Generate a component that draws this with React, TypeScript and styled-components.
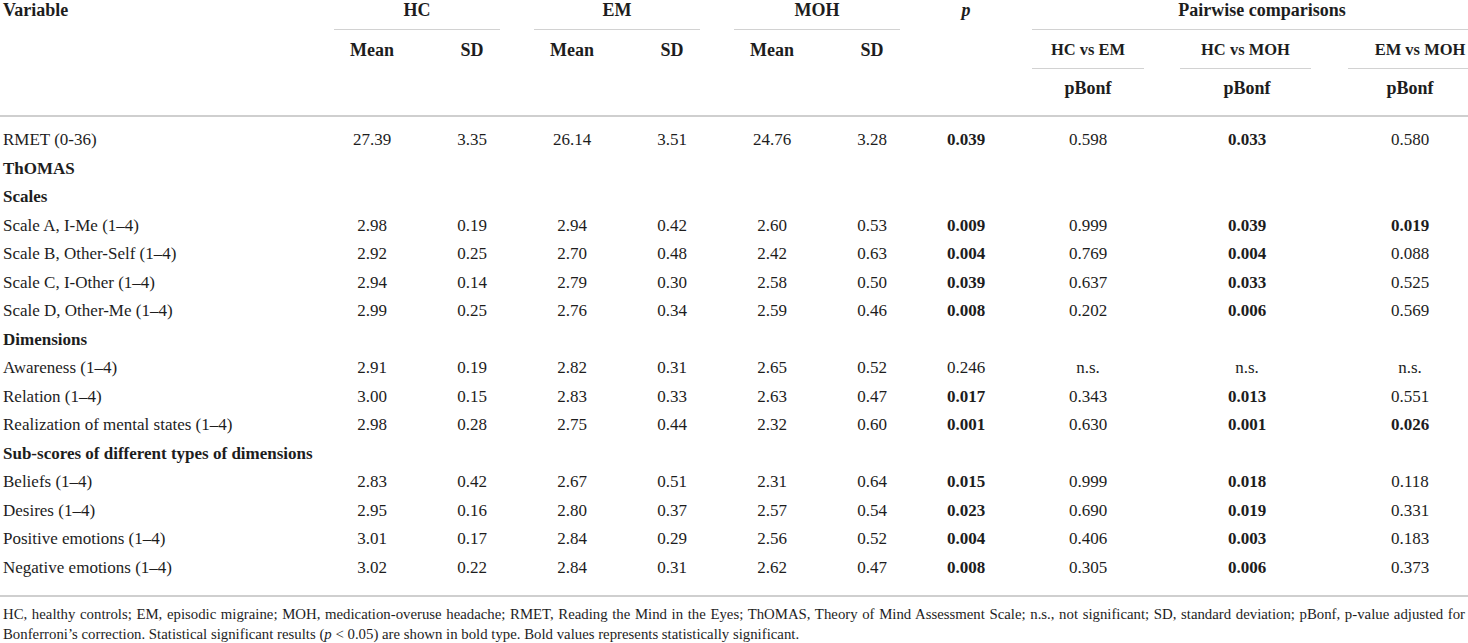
import React from "react";
import styled, { createGlobalStyle } from "styled-components";

const GlobalStyle = createGlobalStyle`
	html, body {
		margin: 0;
		padding: 0;
		background: #ffffff;
	}
	body {
		font-family: "Liberation Serif", "DejaVu Serif", serif;
		color: #1d1d1d;
		overflow: hidden;
	}
`;

const Page = styled.div`
	width: 1468px;
	height: 643px;
	overflow: hidden;
`;

const Table = styled.table`
	width: 1492px;
	table-layout: fixed;
	border-collapse: collapse;
	font-size: 17px;
`;

const HeadCell = styled.th<{ $align?: "left" | "center"; $pt?: number; $last?: boolean; $small?: boolean }>`
	padding: ${p => p.$pt ?? 0}px 0 ${p => (p.$last ? 17 : 0)}px ${p => (p.$align === "left" ? 3 : 0)}px;
	text-align: ${p => p.$align ?? "center"};
	vertical-align: top;
	font-size: ${p => (p.$small ? 16.5 : 18)}px;
	line-height: 20px;
	font-weight: 700;
	white-space: nowrap;
	border-bottom: ${p => (p.$last ? "2px solid #cfcfcf" : "none")};
`;

const Underlined = styled.div<{ $l: number; $r: number; $pb: number }>`
	margin: 0 ${p => p.$r}px 0 ${p => p.$l}px;
	padding-bottom: ${p => p.$pb}px;
	border-bottom: 1px solid #d2d2d2;
`;

const Italic = styled.span`
	font-style: italic;
`;

const Row = styled.tr`
	&:first-child td {
		padding-top: 9px;
	}
	&:last-child td {
		padding-bottom: 13px;
		border-bottom: 2px solid #cfcfcf;
	}
`;

const Cell = styled.td<{ $bold?: boolean; $label?: boolean }>`
	padding: 0 0 0 ${p => (p.$label ? 3 : 0)}px;
	height: 28.5px;
	line-height: 28.5px;
	text-align: ${p => (p.$label ? "left" : "center")};
	font-weight: ${p => (p.$bold ? 700 : 400)};
	white-space: nowrap;
	vertical-align: middle;
`;

const Footnote = styled.p`
	margin: 7px 3px 0 3px;
	font-size: 14.8px;
	line-height: 20px;
	text-align: justify;
`;

const colWidths = [322, 100, 100, 100, 100, 100, 100, 88, 156, 162, 164];

type DataRow = { label: string; values?: string[] };

// values starting with "*" are shown in bold
const rows: DataRow[] = [
	{ label: "RMET (0-36)", values: ["27.39", "3.35", "26.14", "3.51", "24.76", "3.28", "*0.039", "0.598", "*0.033", "0.580"] },
	{ label: "ThOMAS" },
	{ label: "Scales" },
	{ label: "Scale A, I-Me (1–4)", values: ["2.98", "0.19", "2.94", "0.42", "2.60", "0.53", "*0.009", "0.999", "*0.039", "*0.019"] },
	{ label: "Scale B, Other-Self (1–4)", values: ["2.92", "0.25", "2.70", "0.48", "2.42", "0.63", "*0.004", "0.769", "*0.004", "0.088"] },
	{ label: "Scale C, I-Other (1–4)", values: ["2.94", "0.14", "2.79", "0.30", "2.58", "0.50", "*0.039", "0.637", "*0.033", "0.525"] },
	{ label: "Scale D, Other-Me (1–4)", values: ["2.99", "0.25", "2.76", "0.34", "2.59", "0.46", "*0.008", "0.202", "*0.006", "0.569"] },
	{ label: "Dimensions" },
	{ label: "Awareness (1–4)", values: ["2.91", "0.19", "2.82", "0.31", "2.65", "0.52", "0.246", "n.s.", "n.s.", "n.s."] },
	{ label: "Relation (1–4)", values: ["3.00", "0.15", "2.83", "0.33", "2.63", "0.47", "*0.017", "0.343", "*0.013", "0.551"] },
	{ label: "Realization of mental states (1–4)", values: ["2.98", "0.28", "2.75", "0.44", "2.32", "0.60", "*0.001", "0.630", "*0.001", "*0.026"] },
	{ label: "Sub-scores of different types of dimensions" },
	{ label: "Beliefs (1–4)", values: ["2.83", "0.42", "2.67", "0.51", "2.31", "0.64", "*0.015", "0.999", "*0.018", "0.118"] },
	{ label: "Desires (1–4)", values: ["2.95", "0.16", "2.80", "0.37", "2.57", "0.54", "*0.023", "0.690", "*0.019", "0.331"] },
	{ label: "Positive emotions (1–4)", values: ["3.01", "0.17", "2.84", "0.29", "2.56", "0.52", "*0.004", "0.406", "*0.003", "0.183"] },
	{ label: "Negative emotions (1–4)", values: ["3.02", "0.22", "2.84", "0.31", "2.62", "0.47", "*0.008", "0.305", "*0.006", "0.373"] },
];

const groups = ["HC", "EM", "MOH"];
const pairs: { name: string; l: number; r: number }[] = [
	{ name: "HC vs EM", l: 22, r: 22 },
	{ name: "HC vs MOH", l: 14, r: 17 },
	{ name: "EM vs MOH", l: 20, r: 0 },
];

export default function App() {
	return (
		<Page>
			<GlobalStyle />
			<Table>
				<colgroup>
					{colWidths.map((w, i) => (
						<col key={i} style={{ width: w }} />
					))}
				</colgroup>
				<thead>
					<tr>
						<HeadCell $align="left">Variable</HeadCell>
						{groups.map(g => (
							<HeadCell key={g} colSpan={2}>
								<Underlined $l={12} $r={22} $pb={9}>{g}</Underlined>
							</HeadCell>
						))}
						<HeadCell>
							<Italic>p</Italic>
						</HeadCell>
						<HeadCell colSpan={3}>
							<Underlined $l={22} $r={0} $pb={9}>Pairwise comparisons</Underlined>
						</HeadCell>
					</tr>
					<tr>
						<HeadCell $pt={10} />
						{groups.map(g => (
							<React.Fragment key={g}>
								<HeadCell $pt={10}>Mean</HeadCell>
								<HeadCell $pt={10}>SD</HeadCell>
							</React.Fragment>
						))}
						<HeadCell $pt={10} />
						{pairs.map(p => (
							<HeadCell key={p.name} $pt={10} $small>
								<Underlined $l={p.l} $r={p.r} $pb={8}>{p.name}</Underlined>
							</HeadCell>
						))}
					</tr>
					<tr>
						{Array.from({ length: 8 }).map((_, i) => (
							<HeadCell key={i} $pt={9} $last />
						))}
						{pairs.map(p => (
							<HeadCell key={p.name} $pt={9} $last>pBonf</HeadCell>
						))}
					</tr>
				</thead>
				<tbody>
					{rows.map(r => (
						<Row key={r.label}>
							{r.values ? (
								<>
									<Cell $label>{r.label}</Cell>
									{r.values.map((v, i) => {
										const bold = v.startsWith("*");
										return (
											<Cell key={i} $bold={bold}>
												{bold ? v.slice(1) : v}
											</Cell>
										);
									})}
								</>
							) : (
								<Cell $label $bold colSpan={11}>
									{r.label}
								</Cell>
							)}
						</Row>
					))}
				</tbody>
			</Table>
			<Footnote>
				HC, healthy controls; EM, episodic migraine; MOH, medication-overuse headache; RMET, Reading the Mind in the
				Eyes; ThOMAS, Theory of Mind Assessment Scale; n.s., not significant; SD, standard deviation; pBonf, p-value
				adjusted for Bonferroni’s correction. Statistical significant results (<Italic>p</Italic> &lt; 0.05) are shown in
				bold type. Bold values represents statistically significant.
			</Footnote>
		</Page>
	);
}
